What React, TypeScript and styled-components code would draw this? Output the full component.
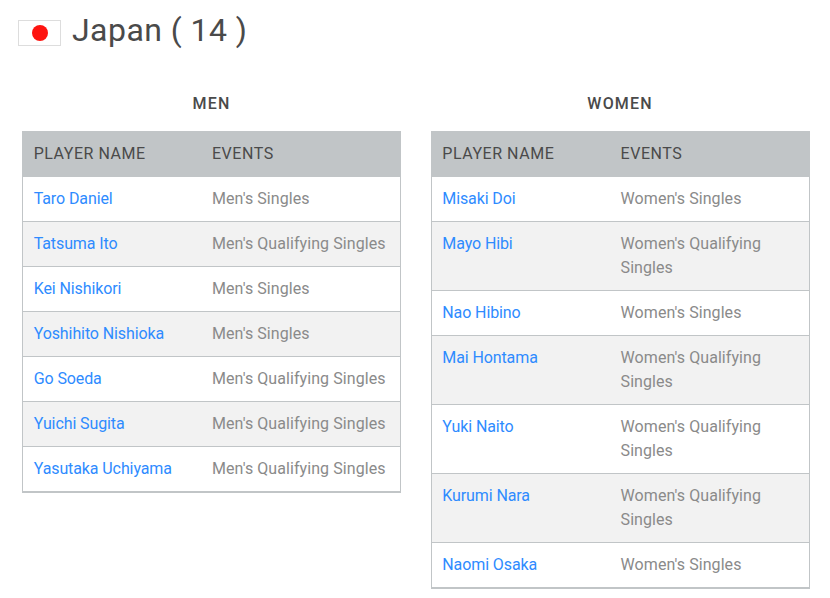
import React from "react";
import styled, { createGlobalStyle } from "styled-components";

const Global = createGlobalStyle`
    html, body {
        margin: 0;
        background: #fff;
    }
    body {
        font-family: "Roboto", "Liberation Sans", sans-serif;
    }
`
const Page = styled.div`
    width: 830px;
    height: 598px;
    overflow: hidden;
    padding: 12px 20px 0 18px;
    box-sizing: border-box;
`
const Header = styled.div`
    display: flex;
    align-items: center;
    gap: 11px;
    height: 36px;
`
const Flag = styled.div`
    width: 43px;
    height: 26px;
    margin-top: 6px;
    box-sizing: border-box;
    border: 1px solid #ddd;
    display: flex;
    align-items: center;
    justify-content: center;
    &::after {
        content: "";
        width: 16px;
        height: 16px;
        border-radius: 50%;
        background: #fe1410;
    }
`
const Title = styled.h1`
    margin: 0;
    font-size: 32px;
    font-weight: 400;
    letter-spacing: 0.45px;
    color: #4a4a4a;
`
const Columns = styled.div`
    display: flex;
    gap: 29.6px;
    margin: 44px 0 0 4px;
`
const Column = styled.section`
    width: 379px;
`
const Heading = styled.h2`
    margin: 0;
    height: 39px;
    line-height: 24px;
    font-size: 16px;
    font-weight: 500;
    letter-spacing: 1.2px;
    text-align: center;
    color: #4a4a4a;
`
const Table = styled.table`
    width: 379px;
    table-layout: fixed;
    border-collapse: separate;
    border-spacing: 0;
    border-left: 1px solid #c1c5c7;
    border-right: 1px solid #c1c5c7;
    border-bottom: 1px solid #c1c5c7;
    font-size: 16px;
    line-height: 24px;
`
const HeadCell = styled.th<{ $wide?: boolean }>`
    width: ${p => (p.$wide ? "178px" : "auto")};
    height: 46px;
    box-sizing: border-box;
    padding: 0 11px 0 ${p => (p.$wide ? "10.7px" : "11px")};
    background: #c1c5c7;
    color: #4a4a4a;
    font-weight: 400;
    letter-spacing: 0.53px;
    text-align: left;
`
const Row = styled.tr`
    &:nth-child(even) td {
        background: #f2f2f2;
    }
`
const Cell = styled.td<{ $name?: boolean }>`
    padding: 10px 11px 10px ${p => (p.$name ? "10.7px" : "11px")};
    border-bottom: 1px solid #c1c5c7;
    vertical-align: top;
    color: #8a8a8a;
    letter-spacing: 0.07px;
`
const PlayerLink = styled.a`
    color: #2e8bff;
    letter-spacing: -0.1px;
    text-decoration: none;
`

const men = [
    ["Taro Daniel", "Men's Singles"],
    ["Tatsuma Ito", "Men's Qualifying Singles"],
    ["Kei Nishikori", "Men's Singles"],
    ["Yoshihito Nishioka", "Men's Singles"],
    ["Go Soeda", "Men's Qualifying Singles"],
    ["Yuichi Sugita", "Men's Qualifying Singles"],
    ["Yasutaka Uchiyama", "Men's Qualifying Singles"],
]
const women = [
    ["Misaki Doi", "Women's Singles"],
    ["Mayo Hibi", "Women's Qualifying Singles"],
    ["Nao Hibino", "Women's Singles"],
    ["Mai Hontama", "Women's Qualifying Singles"],
    ["Yuki Naito", "Women's Qualifying Singles"],
    ["Kurumi Nara", "Women's Qualifying Singles"],
    ["Naomi Osaka", "Women's Singles"],
]

const Players = ({ title, rows }: { title: string, rows: string[][] }) => (
    <Column>
        <Heading>{title}</Heading>
        <Table>
            <thead>
                <tr>
                    <HeadCell $wide>PLAYER NAME</HeadCell>
                    <HeadCell>EVENTS</HeadCell>
                </tr>
            </thead>
            <tbody>
                {rows.map(([name, events]) => (
                    <Row key={name}>
                        <Cell $name><PlayerLink href="#">{name}</PlayerLink></Cell>
                        <Cell>{events}</Cell>
                    </Row>
                ))}
            </tbody>
        </Table>
    </Column>
)

export default function App() {
    return (
        <Page>
            <Global />
            <Header>
                <Flag />
                <Title>Japan ( 14 )</Title>
            </Header>
            <Columns>
                <Players title="MEN" rows={men} />
                <Players title="WOMEN" rows={women} />
            </Columns>
        </Page>
    )
}
